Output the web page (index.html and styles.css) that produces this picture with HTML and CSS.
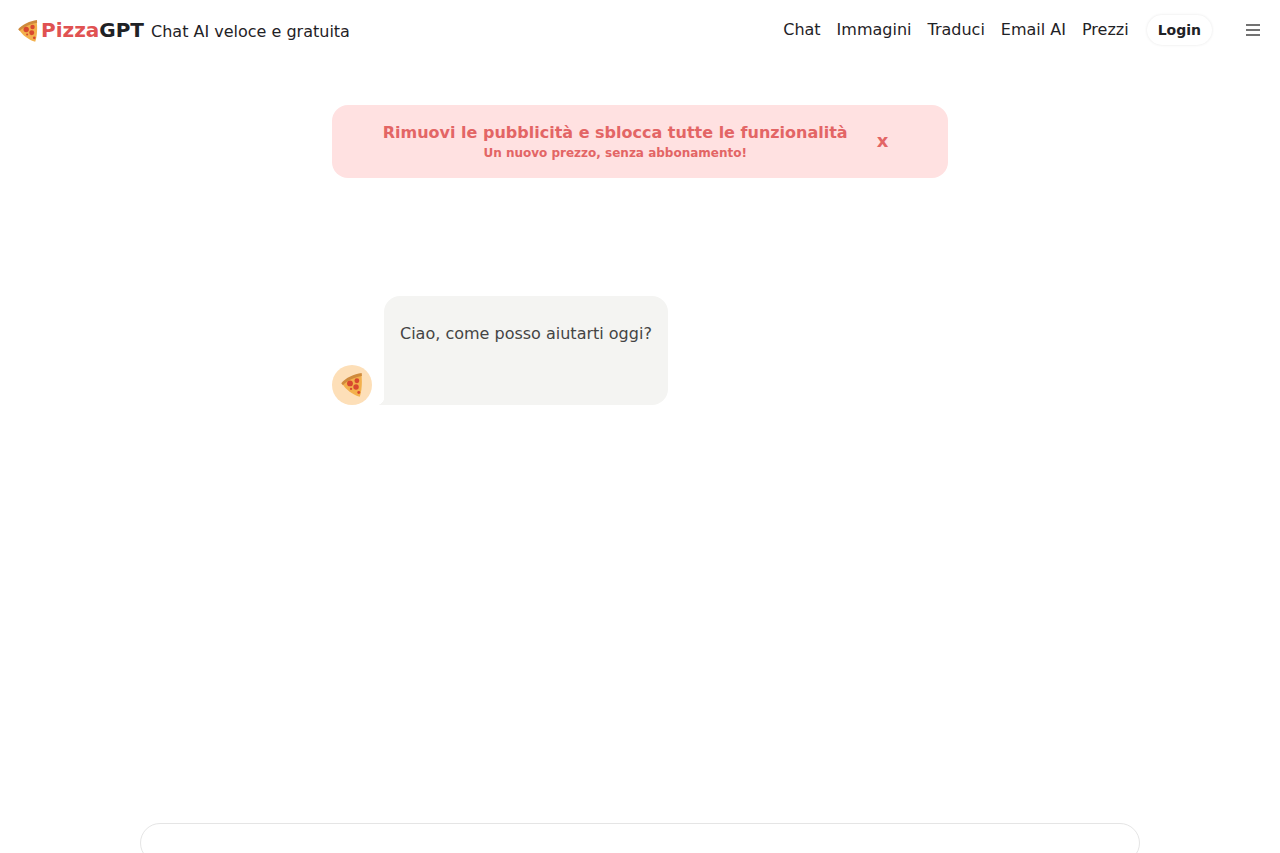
FILE: index.html
```html
<!DOCTYPE html>
<html lang="it">
<head>
<meta charset="utf-8">
<title>PizzaGPT</title>
<link rel="stylesheet" href="styles.css">
</head>
<body>
<svg class="defs" width="0" height="0" aria-hidden="true">
  <defs>
    <symbol id="pizza" viewBox="0 0 24 24">
      <path d="M20.5 2 C14 3 6.5 6 2.5 11.5 C5 16.5 12.5 22 19 23.8 C21 18 21.5 9 20.5 2 Z" fill="#f3b04c"/>
      <path d="M20.8 1 C13.5 2 5.5 5.5 1.2 10.8 L2.8 12.6 C7 8 14 5 21 3.8 Z" fill="#cf8a3c"/>
      <circle cx="9.6" cy="11" r="2.8" fill="#d8482f"/>
      <circle cx="16.2" cy="8.4" r="2.3" fill="#d8482f"/>
      <circle cx="15.4" cy="14.4" r="2.6" fill="#d8482f"/>
      <circle cx="10.6" cy="16.2" r="1.1" fill="#d8482f"/>
      <circle cx="18" cy="19.6" r="1.4" fill="#d8482f"/>
    </symbol>
  </defs>
</svg>
<header class="topbar">
  <div class="brand">
    <svg class="brand-icon"><use href="#pizza"/></svg>
    <span class="brand-name"><span class="red">Pizza</span>GPT</span>
    <span class="tagline">Chat AI veloce e gratuita</span>
  </div>
  <nav class="nav">
    <a class="nav-link">Chat</a>
    <a class="nav-link">Immagini</a>
    <a class="nav-link">Traduci</a>
    <a class="nav-link">Email AI</a>
    <a class="nav-link">Prezzi</a>
    <button class="login">Login</button>
    <button class="menu" aria-label="Menu">
      <svg width="16" height="12" viewBox="0 0 16 12"><path d="M1 1h14M1 6h14M1 11h14" stroke="#444" stroke-width="1.5" fill="none"/></svg>
    </button>
  </nav>
</header>
<main class="main">
  <div class="promo">
    <div class="promo-text">
      <div class="promo-title">Rimuovi le pubblicità e sblocca tutte le funzionalità</div>
      <div class="promo-sub">Un nuovo prezzo, senza abbonamento!</div>
    </div>
    <span class="promo-close">x</span>
  </div>
  <div class="chat-row">
    <div class="avatar"><svg class="avatar-icon"><use href="#pizza"/></svg></div>
    <div class="bubble">Ciao, come posso aiutarti oggi?</div>
  </div>
</main>
<div class="composer"></div>
</body>
</html>
```
FILE: styles.css
```css
* { box-sizing: border-box; }
html, body { margin: 0; height: 853px; overflow: hidden; background: #fff; }
body { font-family: "DejaVu Sans", sans-serif; color: #1f2226; display: flex; flex-direction: column; }
.defs { display: block; height: 0; }
.topbar { height: 60px; display: flex; align-items: center; justify-content: space-between; padding: 0 19px 0 17px; flex: none; }
.brand { display: flex; align-items: center; }
.brand-icon { width: 23px; height: 23px; flex: none; filter: blur(.3px); }
.brand-name { font-size: 20px; font-weight: 700; margin-left: 1px; color: #1f2226; }
.red { color: #e05252; }
.tagline { font-size: 16px; margin-left: 7px; padding-top: 3px; }
.nav { display: flex; align-items: center; }
.nav-link { font-size: 16px; margin-right: 16px; margin-top: -1px; }
.login { font: 700 14px "DejaVu Sans", sans-serif; color: #1f2226; background: #fff; border: 0; border-radius: 15px; height: 30px; padding: 0 11px; box-shadow: 0 0 3px rgba(0,0,0,.1); margin-left: 2px; }
.menu { background: none; border: 0; padding: 0; margin-left: 33px; display: flex; width: 16px; }
.main { flex: 1; width: 616px; align-self: center; display: flex; flex-direction: column; padding-top: 45px; }
.promo { height: 73px; background: #ffe1e1; border-radius: 16px; display: flex; align-items: center; justify-content: center; padding-right: 9px; color: #e36565; font-weight: 700; }
.promo-text { text-align: center; }
.promo-title { font-size: 16px; line-height: 19px; }
.promo-sub { font-size: 12px; line-height: 16px; margin-top: 3px; }
.promo-close { font-size: 18px; margin-left: 29px; margin-top: -3px; }
.chat-row { display: flex; align-items: flex-end; margin-top: 118px; }
.avatar { width: 40px; height: 40px; border-radius: 50%; background: #fddfb8; display: flex; align-items: center; justify-content: center; flex: none; }
.avatar-icon { width: 25px; height: 25px; margin-top: -1px; margin-left: 1px; filter: blur(.4px); }
.bubble { margin-left: 12px; height: 109px; width: 284px; padding: 26px 16px 0; background: #f4f4f2; border-radius: 16px 16px 16px 0; font-size: 16px; line-height: 24px; color: #444; position: relative; }
.bubble::before { content: ""; position: absolute; left: -8px; bottom: 0; width: 8px; height: 8px; background: radial-gradient(circle at 0 0, transparent 8px, #f4f4f2 8.5px); }
.composer { flex: none; width: 1000px; height: 40px; margin: 0 auto -10px; border: 1px solid #e5e5e5; border-radius: 24px; }
```
